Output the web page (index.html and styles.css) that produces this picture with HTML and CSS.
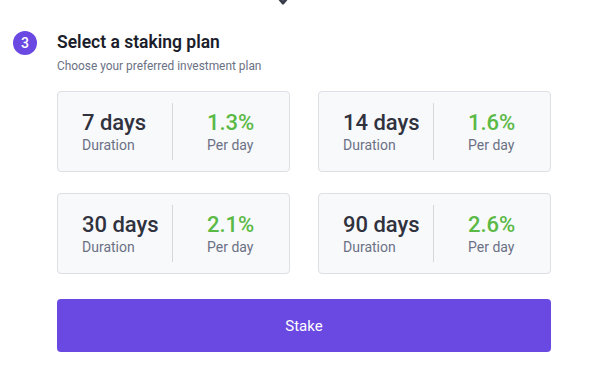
FILE: index.html
```html
<!DOCTYPE html>
<html lang="en">
<head>
    <meta charset="UTF-8">
    <title>Staking plan</title>
    <link rel="stylesheet" href="styles.css">
</head>
<body>

<div class="top-icon">
    <svg width="14" height="14" viewBox="0 0 14 14">
        <path d="M2 2 L7 8 L12 2" fill="none" stroke="#3a3d4a" stroke-width="3" stroke-linecap="round" stroke-linejoin="round"/>
    </svg>
</div>

<div class="step">
    <div class="step-head">
        <span class="badge">3</span>
        <div>
            <h2 class="title">Select a staking plan</h2>
            <p class="subtitle">Choose your preferred investment plan</p>
        </div>
    </div>

    <div class="plans">
        <div class="plan">
            <div class="plan-left">
                <div class="big">7 days</div>
                <div class="small">Duration</div>
            </div>
            <div class="plan-right">
                <div class="big green">1.3%</div>
                <div class="small">Per day</div>
            </div>
        </div>
        <div class="plan">
            <div class="plan-left">
                <div class="big">14 days</div>
                <div class="small">Duration</div>
            </div>
            <div class="plan-right">
                <div class="big green">1.6%</div>
                <div class="small">Per day</div>
            </div>
        </div>
        <div class="plan">
            <div class="plan-left">
                <div class="big">30 days</div>
                <div class="small">Duration</div>
            </div>
            <div class="plan-right">
                <div class="big green">2.1%</div>
                <div class="small">Per day</div>
            </div>
        </div>
        <div class="plan">
            <div class="plan-left">
                <div class="big">90 days</div>
                <div class="small">Duration</div>
            </div>
            <div class="plan-right">
                <div class="big green">2.6%</div>
                <div class="small">Per day</div>
            </div>
        </div>
    </div>

    <button class="stake-btn">Stake</button>
</div>

</body>
</html>
```

FILE: styles.css
```css
body {
    margin: 0;
    background-color: #ffffff;
    font-family: Roboto, "Liberation Sans", sans-serif;
    position: relative;
}
.top-icon {
    position: absolute;
    left: 276px;
    top: -6px;
}
.step {
    padding: 31px 63px 0 13px;
}
.step-head {
    display: flex;
    gap: 20px;
}
.badge {
    width: 24px;
    height: 24px;
    border-radius: 50%;
    background-color: #6a48e2;
    color: white;
    font-size: 14px;
    font-weight: 500;
    display: flex;
    justify-content: center;
    align-items: center;
    flex-shrink: 0;
}
.title {
    margin: 0;
    font-size: 17.5px;
    font-weight: 600;
    color: #1b1d2b;
    line-height: 22px;
}
.subtitle {
    margin: 6px 0 0;
    font-size: 11.9px;
    color: #6b7185;
    line-height: 15px;
}
.plans {
    margin: 17px 0 0 44px;
    display: grid;
    grid-template-columns: 1fr 1fr;
    column-gap: 28px;
    row-gap: 21px;
}
.plan {
    display: flex;
    height: 81px;
    box-sizing: border-box;
    padding: 11px 0 11px 24px;
    background-color: #f8f9fb;
    border: 1px solid #dcdfe4;
    border-radius: 4px;
}
.plan-left {
    width: 90px;
    border-right: 1px solid #d4d7dc;
    display: flex;
    flex-direction: column;
    justify-content: center;
}
.plan-right {
    padding-left: 34px;
    display: flex;
    flex-direction: column;
    justify-content: center;
}
.big {
    font-size: 22px;
    font-weight: 500;
    color: #30323e;
    line-height: 26px;
}
.green {
    color: #5bb945;
}
.small {
    font-size: 14px;
    color: #6b7185;
    line-height: 18px;
}
.stake-btn {
    margin: 25px 0 0 44px;
    width: 494px;
    height: 53px;
    border: none;
    border-radius: 4px;
    background-color: #6a48e2;
    color: white;
    font-family: Roboto, "Liberation Sans", sans-serif;
    font-size: 15px;
}
```
